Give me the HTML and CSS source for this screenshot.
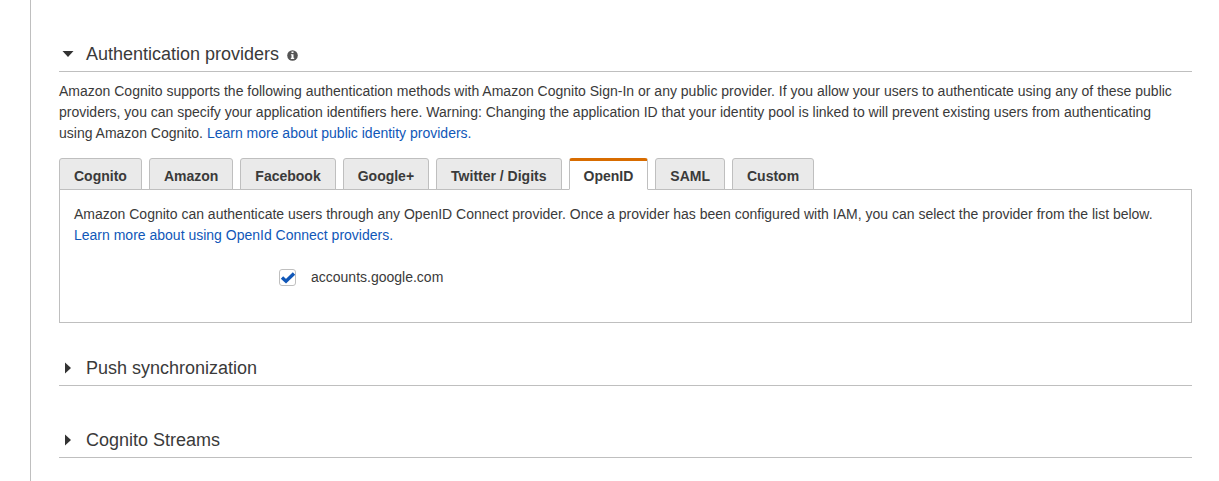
FILE: index.html
```html
<!DOCTYPE html>
<html lang="en">
<head>
<meta charset="utf-8">
<title>Identity pool settings</title>
<link rel="stylesheet" href="styles.css">
</head>
<body>
<main class="page">
  <section class="section">
    <h2 class="heading">
      <button class="toggle" type="button" aria-expanded="true">
        <svg class="caret" viewBox="0 0 12 12" aria-hidden="true"><path d="M0.5 3h11L6 9z"/></svg>Authentication providers</button>
      <svg class="info" viewBox="0 0 11 11" aria-hidden="true"><circle cx="5.5" cy="5.5" r="5.3"/><path d="M4.5 1.6h2v1.5h-2zM3.9 4.2h2.6v3.6h.7v1.1H3.8V7.8h.7V5.3h-.6z"/></svg>
    </h2>
    <p class="intro">Amazon Cognito supports the following authentication methods with Amazon Cognito Sign-In or any public provider. If you allow your users to authenticate using any of these public providers, you can specify your application identifiers here. Warning: Changing the application ID that your identity pool is linked to will prevent existing users from authenticating using Amazon Cognito. <a href="#">Learn more about public identity providers.</a></p>
    <div class="tabs" role="tablist">
      <button class="tab" type="button" role="tab">Cognito</button>
      <button class="tab" type="button" role="tab">Amazon</button>
      <button class="tab" type="button" role="tab">Facebook</button>
      <button class="tab" type="button" role="tab">Google+</button>
      <button class="tab" type="button" role="tab">Twitter / Digits</button>
      <button class="tab active" type="button" role="tab" aria-selected="true">OpenID</button>
      <button class="tab" type="button" role="tab">SAML</button>
      <button class="tab" type="button" role="tab">Custom</button>
    </div>
    <div class="panel" role="tabpanel">
      <p>Amazon Cognito can authenticate users through any OpenID Connect provider. Once a provider has been configured with IAM, you can select the provider from the list below. <a href="#">Learn more about using OpenId Connect providers.</a></p>
      <div class="option">
        <span class="check"><input id="google" class="box" type="checkbox" checked><svg class="tick" viewBox="0 0 17 17" aria-hidden="true"><path d="M3 8.5l4 3.7 8-7.7"/></svg></span>
        <label for="google">accounts.google.com</label>
      </div>
    </div>
  </section>
  <section class="section collapsed">
    <h2 class="heading">
      <button class="toggle" type="button" aria-expanded="false">
        <svg class="caret" viewBox="0 0 12 12" aria-hidden="true"><path d="M3 0.5v11L9 6z"/></svg>Push synchronization</button>
    </h2>
  </section>
  <section class="section collapsed">
    <h2 class="heading">
      <button class="toggle" type="button" aria-expanded="false">
        <svg class="caret" viewBox="0 0 12 12" aria-hidden="true"><path d="M3 0.5v11L9 6z"/></svg>Cognito Streams</button>
    </h2>
  </section>
</main>
</body>
</html>
```
FILE: styles.css
```css
* { box-sizing: border-box; }
body {
  margin: 0;
  background: #fff;
  color: #3a3a3a;
  font: 14px/21px "Liberation Sans", Arial, sans-serif;
}
a { color: #1057b8; text-decoration: none; }
p { margin: 0; }
.page {
  min-height: 100vh;
  margin-left: 30px;
  padding: 37px 27px 14px 28px;
  border-left: 1px solid #bfbfbf;
  display: flex;
  flex-direction: column;
  gap: 28px;
}
.collapsed { padding-bottom: 9px; }
.heading {
  display: flex;
  align-items: center;
  gap: 8px;
  height: 35px;
  margin: 0;
  border-bottom: 1px solid #bfbfbf;
  font-weight: 400;
}
.toggle {
  display: flex;
  align-items: center;
  gap: 12px;
  padding: 0 0 0 3px;
  border: 0;
  background: none;
  color: #3a3a3a;
  font: 18px/24px "Liberation Sans", Arial, sans-serif;
}
.caret { width: 12px; height: 12px; fill: #333; }
.info { width: 11px; height: 11px; margin-top: 3px; fill: #555; }
.info path { fill: #fff; }
.intro { padding: 9px 10px 14px 0; }
.tabs { display: flex; gap: 7px; margin-bottom: -1px; }
.tab {
  height: 32px;
  padding: 4px 14px 0;
  border: 1px solid #bfbfbf;
  border-radius: 3px 3px 0 0;
  background: #eaeaea;
  color: #3a3a3a;
  font: bold 14px/21px "Liberation Sans", Arial, sans-serif;
}
.active {
  padding-top: 2px;
  border-top: 3px solid #d86c00;
  border-bottom-color: #fff;
  background: #fff;
}
.panel {
  min-height: 134px;
  padding: 14px 14px 34px;
  border: 1px solid #bfbfbf;
}
.option {
  display: flex;
  align-items: center;
  gap: 15px;
  padding: 21px 0 0 205px;
}
.check { display: grid; }
.box, .tick { grid-area: 1 / 1; width: 17px; height: 17px; margin: 0; }
.box {
  appearance: none;
  border: 1px solid #bfbfbf;
  border-radius: 3px;
  background: #fff;
}
.tick { fill: none; stroke: #1057b8; stroke-width: 3.4; pointer-events: none; visibility: hidden; }
.box:checked + .tick { visibility: visible; }
```
